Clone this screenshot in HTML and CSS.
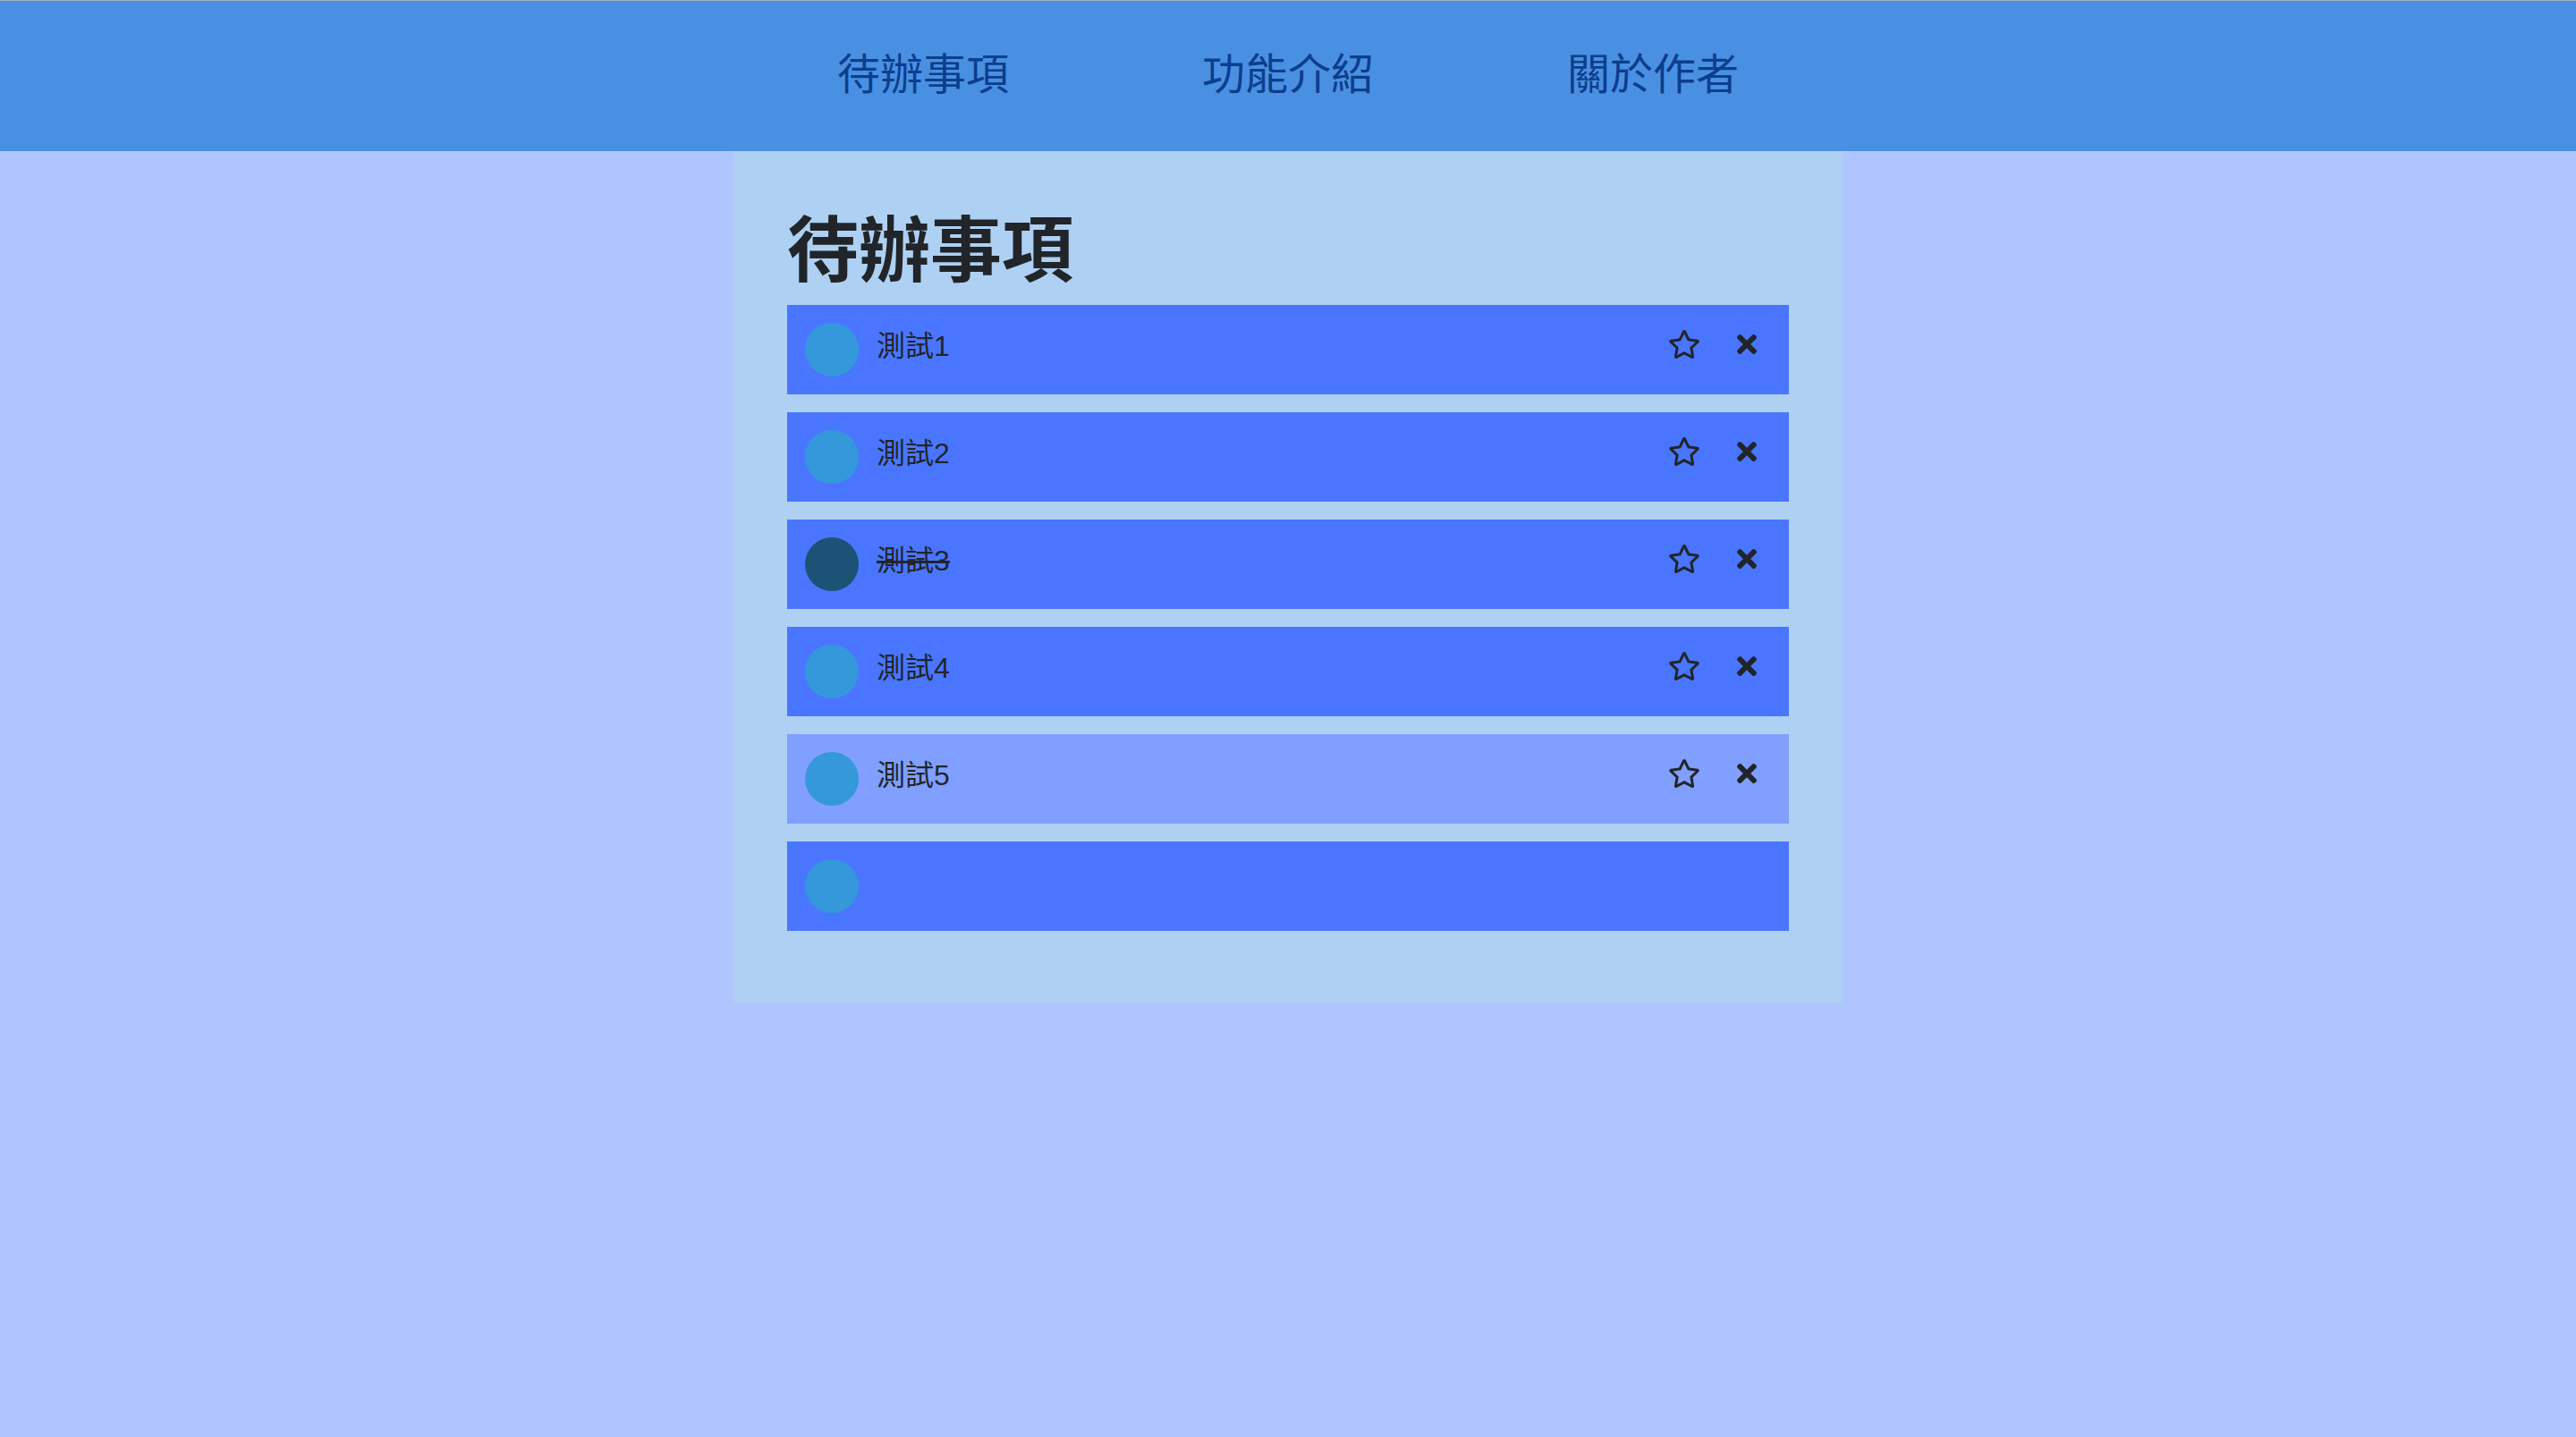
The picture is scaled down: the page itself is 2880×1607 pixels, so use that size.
FILE: index.html
```html
<!DOCTYPE html>
<html lang="zh-Hant">
<head>
<meta charset="utf-8">
<title>待辦事項</title>
<link rel="stylesheet" href="styles.css">
</head>
<body>
<nav class="navbar">
  <ul class="nav-list">
    <li><a class="nav-link" href="#">待辦事項</a></li>
    <li><a class="nav-link" href="#">功能介紹</a></li>
    <li><a class="nav-link" href="#">關於作者</a></li>
  </ul>
</nav>
<main class="panel">
  <h1 class="title">待辦事項</h1>
  <ul class="todo-list">
    <li class="todo">
      <span class="check"></span>
      <span class="todo-text">測試1</span>
      <span class="actions">
        <svg class="icon-star" viewBox="0 0 576 512"><path d="M528.1 171.5L382 150.2 316.7 17.8c-11.7-23.6-45.6-23.9-57.4 0L194 150.2 47.9 171.5c-26.2 3.8-36.7 36.1-17.7 54.6l105.7 103-25 145.5c-4.5 26.3 23.2 46 46.4 33.7L288 439.6l130.7 68.7c23.2 12.2 50.9-7.4 46.4-33.7l-25-145.5 105.7-103c19-18.5 8.5-50.8-17.7-54.6zM388.6 312.3l23.7 138.4L288 385.4l-124.3 65.3 23.7-138.4-100.6-98 139-20.2 62.2-126 62.2 126 139 20.2-100.6 98z"/></svg>
        <svg class="icon-x" viewBox="0 0 352 512"><path d="M242.72 256l100.07-100.07c12.28-12.28 12.28-32.19 0-44.48l-22.24-22.24c-12.28-12.28-32.19-12.28-44.48 0L176 189.28 75.93 89.21c-12.28-12.28-32.19-12.28-44.48 0L9.21 111.45c-12.28 12.28-12.28 32.19 0 44.48L109.28 256 9.21 356.07c-12.28 12.28-12.28 32.19 0 44.48l22.24 22.24c12.28 12.28 32.2 12.28 44.48 0L176 322.72l100.07 100.07c12.28 12.28 32.2 12.28 44.48 0l22.24-22.24c12.28-12.28 12.28-32.19 0-44.48L242.72 256z"/></svg>
      </span>
    </li>
    <li class="todo">
      <span class="check"></span>
      <span class="todo-text">測試2</span>
      <span class="actions">
        <svg class="icon-star" viewBox="0 0 576 512"><path d="M528.1 171.5L382 150.2 316.7 17.8c-11.7-23.6-45.6-23.9-57.4 0L194 150.2 47.9 171.5c-26.2 3.8-36.7 36.1-17.7 54.6l105.7 103-25 145.5c-4.5 26.3 23.2 46 46.4 33.7L288 439.6l130.7 68.7c23.2 12.2 50.9-7.4 46.4-33.7l-25-145.5 105.7-103c19-18.5 8.5-50.8-17.7-54.6zM388.6 312.3l23.7 138.4L288 385.4l-124.3 65.3 23.7-138.4-100.6-98 139-20.2 62.2-126 62.2 126 139 20.2-100.6 98z"/></svg>
        <svg class="icon-x" viewBox="0 0 352 512"><path d="M242.72 256l100.07-100.07c12.28-12.28 12.28-32.19 0-44.48l-22.24-22.24c-12.28-12.28-32.19-12.28-44.48 0L176 189.28 75.93 89.21c-12.28-12.28-32.19-12.28-44.48 0L9.21 111.45c-12.28 12.28-12.28 32.19 0 44.48L109.28 256 9.21 356.07c-12.28 12.28-12.28 32.19 0 44.48l22.24 22.24c12.28 12.28 32.2 12.28 44.48 0L176 322.72l100.07 100.07c12.28 12.28 32.2 12.28 44.48 0l22.24-22.24c12.28-12.28 12.28-32.19 0-44.48L242.72 256z"/></svg>
      </span>
    </li>
    <li class="todo">
      <span class="check done"></span>
      <span class="todo-text completed">測試3</span>
      <span class="actions">
        <svg class="icon-star" viewBox="0 0 576 512"><path d="M528.1 171.5L382 150.2 316.7 17.8c-11.7-23.6-45.6-23.9-57.4 0L194 150.2 47.9 171.5c-26.2 3.8-36.7 36.1-17.7 54.6l105.7 103-25 145.5c-4.5 26.3 23.2 46 46.4 33.7L288 439.6l130.7 68.7c23.2 12.2 50.9-7.4 46.4-33.7l-25-145.5 105.7-103c19-18.5 8.5-50.8-17.7-54.6zM388.6 312.3l23.7 138.4L288 385.4l-124.3 65.3 23.7-138.4-100.6-98 139-20.2 62.2-126 62.2 126 139 20.2-100.6 98z"/></svg>
        <svg class="icon-x" viewBox="0 0 352 512"><path d="M242.72 256l100.07-100.07c12.28-12.28 12.28-32.19 0-44.48l-22.24-22.24c-12.28-12.28-32.19-12.28-44.48 0L176 189.28 75.93 89.21c-12.28-12.28-32.19-12.28-44.48 0L9.21 111.45c-12.28 12.28-12.28 32.19 0 44.48L109.28 256 9.21 356.07c-12.28 12.28-12.28 32.19 0 44.48l22.24 22.24c12.28 12.28 32.2 12.28 44.48 0L176 322.72l100.07 100.07c12.28 12.28 32.2 12.28 44.48 0l22.24-22.24c12.28-12.28 12.28-32.19 0-44.48L242.72 256z"/></svg>
      </span>
    </li>
    <li class="todo">
      <span class="check"></span>
      <span class="todo-text">測試4</span>
      <span class="actions">
        <svg class="icon-star" viewBox="0 0 576 512"><path d="M528.1 171.5L382 150.2 316.7 17.8c-11.7-23.6-45.6-23.9-57.4 0L194 150.2 47.9 171.5c-26.2 3.8-36.7 36.1-17.7 54.6l105.7 103-25 145.5c-4.5 26.3 23.2 46 46.4 33.7L288 439.6l130.7 68.7c23.2 12.2 50.9-7.4 46.4-33.7l-25-145.5 105.7-103c19-18.5 8.5-50.8-17.7-54.6zM388.6 312.3l23.7 138.4L288 385.4l-124.3 65.3 23.7-138.4-100.6-98 139-20.2 62.2-126 62.2 126 139 20.2-100.6 98z"/></svg>
        <svg class="icon-x" viewBox="0 0 352 512"><path d="M242.72 256l100.07-100.07c12.28-12.28 12.28-32.19 0-44.48l-22.24-22.24c-12.28-12.28-32.19-12.28-44.48 0L176 189.28 75.93 89.21c-12.28-12.28-32.19-12.28-44.48 0L9.21 111.45c-12.28 12.28-12.28 32.19 0 44.48L109.28 256 9.21 356.07c-12.28 12.28-12.28 32.19 0 44.48l22.24 22.24c12.28 12.28 32.2 12.28 44.48 0L176 322.72l100.07 100.07c12.28 12.28 32.2 12.28 44.48 0l22.24-22.24c12.28-12.28 12.28-32.19 0-44.48L242.72 256z"/></svg>
      </span>
    </li>
    <li class="todo hover">
      <span class="check"></span>
      <span class="todo-text">測試5</span>
      <span class="actions">
        <svg class="icon-star" viewBox="0 0 576 512"><path d="M528.1 171.5L382 150.2 316.7 17.8c-11.7-23.6-45.6-23.9-57.4 0L194 150.2 47.9 171.5c-26.2 3.8-36.7 36.1-17.7 54.6l105.7 103-25 145.5c-4.5 26.3 23.2 46 46.4 33.7L288 439.6l130.7 68.7c23.2 12.2 50.9-7.4 46.4-33.7l-25-145.5 105.7-103c19-18.5 8.5-50.8-17.7-54.6zM388.6 312.3l23.7 138.4L288 385.4l-124.3 65.3 23.7-138.4-100.6-98 139-20.2 62.2-126 62.2 126 139 20.2-100.6 98z"/></svg>
        <svg class="icon-x" viewBox="0 0 352 512"><path d="M242.72 256l100.07-100.07c12.28-12.28 12.28-32.19 0-44.48l-22.24-22.24c-12.28-12.28-32.19-12.28-44.48 0L176 189.28 75.93 89.21c-12.28-12.28-32.19-12.28-44.48 0L9.21 111.45c-12.28 12.28-12.28 32.19 0 44.48L109.28 256 9.21 356.07c-12.28 12.28-12.28 32.19 0 44.48l22.24 22.24c12.28 12.28 32.2 12.28 44.48 0L176 322.72l100.07 100.07c12.28 12.28 32.2 12.28 44.48 0l22.24-22.24c12.28-12.28 12.28-32.19 0-44.48L242.72 256z"/></svg>
      </span>
    </li>
    <li class="todo">
      <span class="check"></span>
      <span class="todo-text"></span>
    </li>
  </ul>
</main>
</body>
</html>
```
FILE: styles.css
```css
html, body {
  margin: 0;
  padding: 0;
}
body {
  background: #b0c4fe;
  font-family: "Liberation Sans", "Noto Sans CJK TC", sans-serif;
  color: #212529;
  min-height: 1607px;
}
.navbar {
  background: #4a90e2;
  border-top: 1px solid #a9b3c2;
  height: 168px;
  display: flex;
  align-items: center;
  justify-content: center;
}
.nav-list {
  list-style: none;
  margin: 0;
  padding: 0;
  display: flex;
  gap: 216px;
}
.nav-link {
  display: block;
  font-size: 48px;
  line-height: 72px;
  color: #0c3e8e;
  text-decoration: none;
  margin-top: -3px;
}
.panel {
  width: 1120px;
  margin: 0 auto;
  background: #aed0f2;
  padding: 60px 60px 80px;
}
.title {
  margin: 0 0 12px;
  padding-top: 4px;
  font-size: 80px;
  line-height: 96px;
  font-weight: 700;
  color: #212529;
}
.todo-list {
  list-style: none;
  margin: 0;
  padding: 0;
  display: flex;
  flex-direction: column;
  gap: 20px;
}
.todo {
  height: 100px;
  box-sizing: border-box;
  padding: 20px 36px 20px 20px;
  background: #4a76ff;
  display: flex;
  align-items: flex-start;
}
.todo.hover {
  background: #809ffe;
}
.check {
  width: 60px;
  height: 60px;
  border-radius: 50%;
  background: #3498db;
  flex: none;
}
.check.done {
  background: #1b5275;
}
.todo-text {
  margin-left: 20px;
  margin-top: 2px;
  font-size: 32px;
  line-height: 48px;
  color: #212529;
}
.todo-text.completed {
  text-decoration: line-through;
}
.actions {
  margin-left: auto;
  display: flex;
  align-items: center;
  height: 48px;
  gap: 41px;
}
.icon-star {
  width: 36px;
  height: 32px;
  fill: #212529;
}
.icon-x {
  width: 22px;
  height: 32px;
  fill: #212529;
}
```
